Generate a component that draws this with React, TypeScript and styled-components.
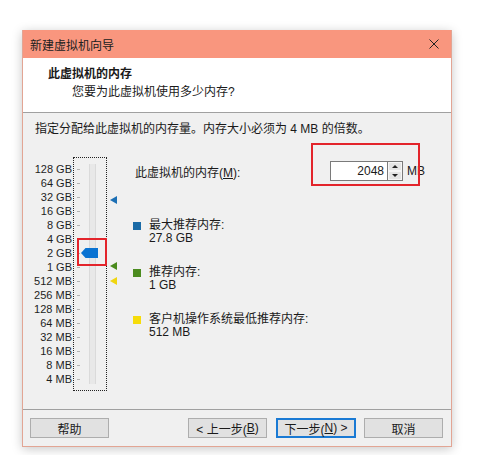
import React from "react";
import styled, { createGlobalStyle } from "styled-components";

const GlobalStyle = createGlobalStyle`
  body {
    margin: 0;
    background: #ffffff;
    font-family: "Liberation Sans", "Noto Sans CJK SC", sans-serif;
    font-size: 12px;
    color: #1a1a1a;
  }
`;

const Page = styled.div`
  padding: 30px 0 0 22px;
  height: 425px;
`;

const Window = styled.div`
  width: 428px;
  border: 1px solid #e2a594;
  border-top: none;
  box-shadow: 0 2px 10px rgba(0, 0, 0, 0.22);
  background: #f0f0f0;
`;

const TitleBar = styled.div`
  height: 28px;
  background: #f9967e;
  display: flex;
  align-items: center;
  justify-content: space-between;
  padding: 0 12px 0 7px;
  font-size: 12px;
  color: #202020;
`;

const CloseIcon = styled.svg`
  width: 10px;
  height: 10px;
`;

const Header = styled.div`
  height: 55px;
  background: #ffffff;
  border-bottom: 1px solid #a0a0a0;
  padding: 8px 0 0 25px;
  box-sizing: border-box;
`;

const HeaderTitle = styled.div`
  font-weight: bold;
  line-height: 16px;
  font-size: 12px;
`;

const HeaderSub = styled.div`
  line-height: 16px;
  margin-top: 2px;
  padding-left: 24px;
`;

const Content = styled.div`
  height: 296px;
  padding: 8px 0 0 12px;
  box-sizing: border-box;
`;

const Intro = styled.div`
  line-height: 16px;
`;

const SliderRow = styled.div`
  display: flex;
  align-items: flex-start;
  margin-top: 20px;
`;

const ScaleLabels = styled.div`
  width: 37px;
  padding-top: 5px;
  display: flex;
  flex-direction: column;
  align-items: flex-end;
  font-size: 11px;
  color: #1e1e1e;
`;

const ScaleLabel = styled.div`
  height: 14px;
  line-height: 14px;
  white-space: nowrap;
`;

const SliderBox = styled.div`
  position: relative;
  margin-left: 1px;
  width: 34px;
  height: 234px;
  border: 1px dotted #222;
  box-sizing: border-box;
  display: flex;
  padding: 4px 0 0 3px;
`;

const Ticks = styled.div`
  width: 4px;
  display: flex;
  flex-direction: column;
`;

const Tick = styled.div`
  height: 14px;
  display: flex;
  align-items: center;
  &::after {
    content: "";
    width: 3px;
    height: 1px;
    background: #b4b4b4;
  }
`;

const Track = styled.div`
  margin: 2px 0 0 8px;
  width: 5px;
  height: 220px;
  background: #e8e8e8;
  border-left: 1px solid #dadada;
  border-right: 1px solid #dadada;
`;

const Thumb = styled.svg`
  position: absolute;
  left: 7px;
  top: 90px;
  width: 17px;
  height: 10px;
`;

const Highlight = styled.div<{ $w: number; $h: number }>`
  position: absolute;
  border: 2px solid #e3242b;
  box-sizing: border-box;
  width: ${(p) => p.$w}px;
  height: ${(p) => p.$h}px;
`;

const MarkerColumn = styled.div`
  position: relative;
  width: 8px;
  height: 234px;
  margin-left: 3px;
`;

const Marker = styled.div<{ $color: string }>`
  position: absolute;
  left: 0;
  width: 0;
  height: 0;
  border-top: 4px solid transparent;
  border-bottom: 4px solid transparent;
  border-right: 7px solid ${(p) => p.$color};
`;

const InfoColumn = styled.div`
  margin-left: 15px;
  width: 292px;
  display: flex;
  flex-direction: column;
`;

const MemoryRow = styled.div`
  position: relative;
  display: flex;
  align-items: center;
  margin-top: 4px;
  height: 20px;
  padding-left: 2px;
`;

const MemoryLabel = styled.div`
  flex: 1;
  u {
    text-decoration: underline;
  }
`;

const SpinGroup = styled.div`
  display: flex;
  align-items: center;
`;

const SpinInput = styled.div`
  width: 57px;
  height: 20px;
  box-sizing: border-box;
  border: 1px solid #7a7a7a;
  border-right: none;
  background: #fff;
  text-align: right;
  padding-right: 3px;
  line-height: 18px;
  font-size: 12px;
`;

const SpinButtons = styled.div`
  width: 16px;
  height: 20px;
  box-sizing: border-box;
  border: 1px solid #7a7a7a;
  display: flex;
  flex-direction: column;
`;

const SpinButton = styled.div<{ $up?: boolean }>`
  flex: 1;
  background: #e5e5e5;
  border: 1px solid #f6f6f6;
  display: flex;
  align-items: center;
  justify-content: center;
  &::after {
    content: "";
    border-left: 3px solid transparent;
    border-right: 3px solid transparent;
    ${(p) =>
      p.$up ? "border-bottom: 3px solid #222;" : "border-top: 3px solid #222;"}
  }
`;

const Unit = styled.span`
  margin-left: 4px;
`;

const Legend = styled.div`
  display: flex;
  flex-direction: column;
  gap: 21px;
  margin-top: 38px;
`;

const LegendItem = styled.div`
  display: flex;
  align-items: flex-start;
`;

const Swatch = styled.div<{ $color: string }>`
  width: 8px;
  height: 8px;
  margin-top: 3px;
  background: ${(p) => p.$color};
`;

const LegendText = styled.div`
  margin-left: 8px;
  line-height: 13px;
`;

const Footer = styled.div`
  height: 36px;
  border-top: 1px solid #a0a0a0;
  display: flex;
  align-items: center;
  padding: 0 8px 0 7px;
`;

const Button = styled.div<{ $primary?: boolean; $gap?: number }>`
  width: 79px;
  height: 20px;
  box-sizing: border-box;
  margin-left: ${(p) => p.$gap ?? 0}px;
  background: #e1e1e1;
  border: ${(p) => (p.$primary ? "2px solid #1a7ad4" : "1px solid #adadad")};
  display: flex;
  align-items: center;
  justify-content: center;
  font-size: 12px;
  color: #1a1a1a;
  u {
    text-decoration: underline;
  }
`;

const scale = [
  "128 GB", "64 GB", "32 GB", "16 GB", "8 GB", "4 GB", "2 GB", "1 GB",
  "512 MB", "256 MB", "128 MB", "64 MB", "32 MB", "16 MB", "8 MB", "4 MB",
];

const markers = [
  { top: 39, color: "#1c6fb4" },
  { top: 105, color: "#4a8a1d" },
  { top: 120, color: "#f0d610" },
];

const legend = [
  { color: "#1a6aa6", label: "最大推荐内存:", value: "27.8 GB" },
  { color: "#4b8b1f", label: "推荐内存:", value: "1 GB" },
  { color: "#f6dc0a", label: "客户机操作系统最低推荐内存:", value: "512 MB" },
];

export default function App() {
  return (
    <>
      <GlobalStyle />
      <Page>
        <Window>
          <TitleBar>
            <span>新建虚拟机向导</span>
            <CloseIcon viewBox="0 0 10 10">
              <path d="M0.5 0.5 L9.5 9.5 M9.5 0.5 L0.5 9.5" stroke="#222" strokeWidth="1" />
            </CloseIcon>
          </TitleBar>

          <Header>
            <HeaderTitle>此虚拟机的内存</HeaderTitle>
            <HeaderSub>您要为此虚拟机使用多少内存?</HeaderSub>
          </Header>

          <Content>
            <Intro>指定分配给此虚拟机的内存量。内存大小必须为 4 MB 的倍数。</Intro>

            <SliderRow>
              <ScaleLabels>
                {scale.map((s) => (
                  <ScaleLabel key={s}>{s}</ScaleLabel>
                ))}
              </ScaleLabels>

              <SliderBox>
                <Ticks>
                  {scale.map((s) => (
                    <Tick key={s} />
                  ))}
                </Ticks>
                <Track />
                <Thumb viewBox="0 0 17 10">
                  <polygon points="0,5 4.5,0 17,0 17,10 4.5,10" fill="#0a73d2" />
                </Thumb>
                <Highlight $w={30} $h={28} style={{ left: 3, top: 80 }} />
              </SliderBox>

              <MarkerColumn>
                {markers.map((m) => (
                  <Marker key={m.color} $color={m.color} style={{ top: m.top }} />
                ))}
              </MarkerColumn>

              <InfoColumn>
                <MemoryRow>
                  <MemoryLabel>
                    此虚拟机的内存(<u>M</u>):
                  </MemoryLabel>
                  <SpinGroup>
                    <SpinInput>2048</SpinInput>
                    <SpinButtons>
                      <SpinButton $up />
                      <SpinButton />
                    </SpinButtons>
                    <Unit>MB</Unit>
                  </SpinGroup>
                  <Highlight $w={109} $h={43} style={{ left: 178, top: -18 }} />
                </MemoryRow>

                <Legend>
                  {legend.map((l) => (
                    <LegendItem key={l.label}>
                      <Swatch $color={l.color} />
                      <LegendText>
                        <div>{l.label}</div>
                        <div>{l.value}</div>
                      </LegendText>
                    </LegendItem>
                  ))}
                </Legend>
              </InfoColumn>
            </SliderRow>
          </Content>

          <Footer>
            <Button>帮助</Button>
            <Button $gap={79}>
              &lt; 上一步(<u>B</u>)
            </Button>
            <Button $primary $gap={9} style={{ width: 80 }}>
              下一步(<u>N</u>) &gt;
            </Button>
            <Button $gap={8}>取消</Button>
          </Footer>
        </Window>
      </Page>
    </>
  );
}
